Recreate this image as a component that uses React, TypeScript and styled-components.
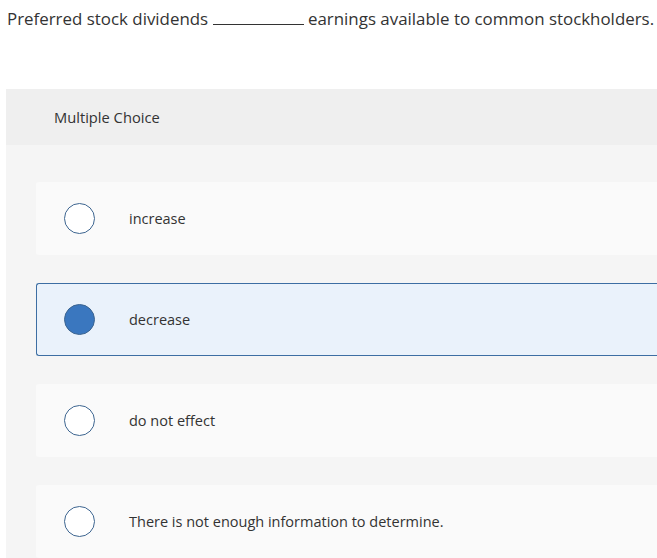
import { createGlobalStyle } from 'styled-components'
import styled from 'styled-components'

const GlobalStyle = createGlobalStyle`
  html, body {
    margin: 0;
    padding: 0;
    background: #ffffff;
    overflow: hidden;
  }
  body {
    font-family: 'Open Sans', Lato, Arial, sans-serif;
    color: #333333;
  }
`

interface Choice {
  id: string
  label: string
}

const choices: Choice[] = [
  { id: 'a', label: 'increase' },
  { id: 'b', label: 'decrease' },
  { id: 'c', label: 'do not effect' },
  { id: 'd', label: 'There is not enough information to determine.' }
]

const selectedId = 'b'

const App = () => {
  return (
    <Page>
      <GlobalStyle />
      <Question>
        Preferred stock dividends <Blank /> earnings available to common stockholders.
      </Question>
      <Panel>
        <PanelHeader>Multiple Choice</PanelHeader>
        <ChoiceList>
          {choices.map((choice) => {
            const isSelected = choice.id === selectedId
            return (
              <ChoiceRow key={choice.id} $selected={isSelected}>
                <Radio $selected={isSelected} />
                <ChoiceLabel>{choice.label}</ChoiceLabel>
              </ChoiceRow>
            )
          })}
        </ChoiceList>
      </Panel>
    </Page>
  )
}

const Page = styled.div`
  width: 100%;
  height: 558px;
  overflow: hidden;
`

const Question = styled.p`
  margin: 0;
  padding: 9px 0 0 7px;
  height: 80px;
  box-sizing: border-box;
  font-size: 16.9px;
  line-height: 20px;
  color: #333333;
  white-space: nowrap;
`

const Blank = styled.span`
  display: inline-block;
  width: 91px;
  border-bottom: 1px solid #333333;
  vertical-align: baseline;
`

const Panel = styled.section`
  margin: 9px 0 0 6px;
  background: #f5f5f5;
`

const PanelHeader = styled.div`
  display: flex;
  align-items: center;
  height: 56px;
  padding-left: 48px;
  background: #efefef;
  font-size: 14.7px;
  color: #333333;
`

const ChoiceList = styled.div`
  display: flex;
  flex-direction: column;
  gap: 28px;
  padding: 37px 0 0 30px;
`

const ChoiceRow = styled.div<{ $selected: boolean }>`
  display: flex;
  align-items: center;
  height: 73px;
  box-sizing: border-box;
  padding-left: 27px;
  gap: 34px;
  border-radius: 3px 0 0 3px;
  border: 1px solid ${(props) => (props.$selected ? '#3d6ea3' : 'transparent')};
  border-right: none;
  background: ${(props) => (props.$selected ? '#eaf2fb' : '#fafafa')};
`

const Radio = styled.span<{ $selected: boolean }>`
  flex: 0 0 auto;
  width: 31px;
  height: 31px;
  box-sizing: border-box;
  border-radius: 50%;
  border: 1.5px solid #3d6590;
  background: ${(props) => (props.$selected ? '#3a77bf' : '#ffffff')};
`

const ChoiceLabel = styled.span`
  font-size: 14.5px;
  color: #333333;
`

export default App
